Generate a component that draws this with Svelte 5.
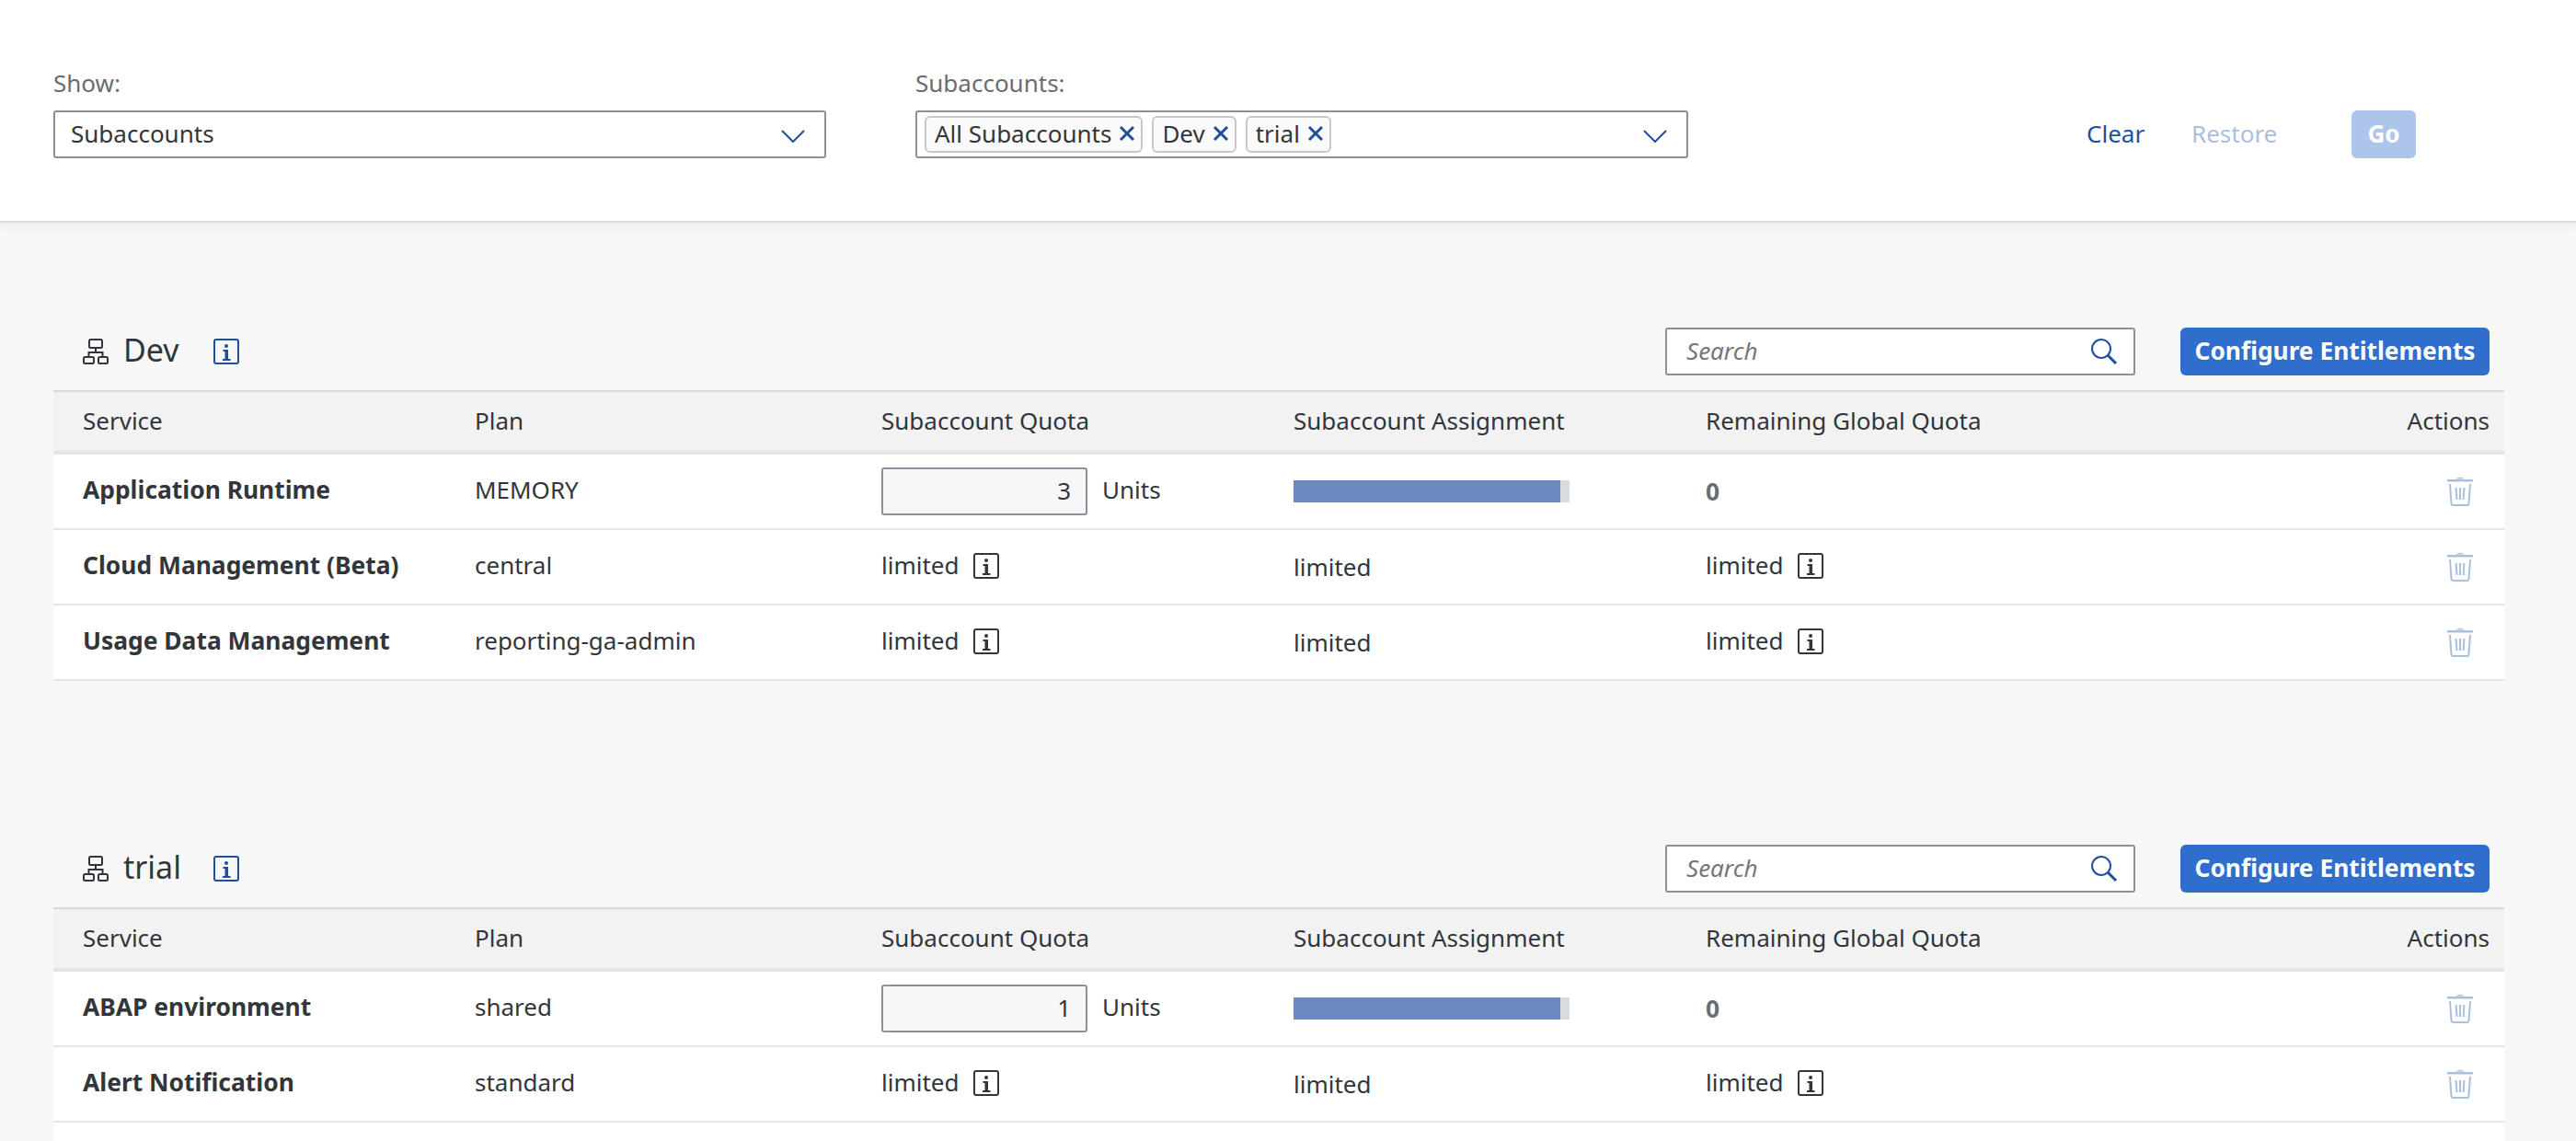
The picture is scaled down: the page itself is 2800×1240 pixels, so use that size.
<script>
  const sections = [
    {
      name: 'Dev',
      rows: [
        { service: 'Application Runtime', plan: 'MEMORY', quota: 3 },
        { service: 'Cloud Management (Beta)', plan: 'central' },
        { service: 'Usage Data Management', plan: 'reporting-ga-admin' }
      ]
    },
    {
      name: 'trial',
      rows: [
        { service: 'ABAP environment', plan: 'shared', quota: 1 },
        { service: 'Alert Notification', plan: 'standard' },
        { service: '', plan: '', blank: true }
      ]
    }
  ]
  const chips = ['All Subaccounts', 'Dev', 'trial']
</script>

{#snippet chevron()}
  <svg class="chevron" width="26" height="14" viewBox="0 0 26 14"><path d="M1 1l12 12L25 1" fill="none" stroke="#1d4f9c" stroke-width="2" /></svg>
{/snippet}

{#snippet info()}
  <svg class="info" width="28" height="28" viewBox="0 0 28 28">
    <rect x="1" y="1" width="26" height="26" rx="2" fill="none" stroke="currentColor" stroke-width="2" />
    <circle cx="14" cy="8" r="2" fill="currentColor" />
    <path d="M10.5 12h5.5v10h2.500v2h-8.500v-2h2.500v-8h-2z" fill="currentColor" />
  </svg>
{/snippet}

{#snippet trash()}
  <svg class="trash" width="28" height="32" viewBox="0 0 28 32">
    <path d="M9 2.500q5-3.500 10 0z" fill="#a9bfde" />
    <path d="M0 3h28v2.500H0z" fill="#a9bfde" />
    <path d="M3 8l1.500 21q.2 2 2 2h15q1.800 0 2-2L25 8" fill="none" stroke="#a9bfde" stroke-width="2" />
    <path d="M9.500 12l1 13M14 12v13M18.500 12l-1 13" fill="none" stroke="#a9bfde" stroke-width="2" />
  </svg>
{/snippet}

<header class="filterbar">
  <div class="field show">
    <span class="label">Show:</span>
    <div class="select">
      <span>Subaccounts</span>
      {@render chevron()}
    </div>
  </div>
  <div class="field subaccounts">
    <span class="label">Subaccounts:</span>
    <div class="select multi">
      <div class="chips">
        {#each chips as chip}
          <span class="chip">
            {chip}
            <svg width="18" height="18" viewBox="0 0 18 18"><path d="M2 2l14 14M16 2L2 16" stroke="#1d4f9c" stroke-width="3" /></svg>
          </span>
        {/each}
      </div>
      {@render chevron()}
    </div>
  </div>
  <div class="bar-actions">
    <span class="link clear">Clear</span>
    <span class="link disabled">Restore</span>
    <button class="go" type="button">Go</button>
  </div>
</header>

<main>
  {#each sections as section}
    <section>
      <div class="title-row">
        <svg class="tree" width="28" height="28" viewBox="0 0 28 28" fill="none" stroke="#32363a" stroke-width="2">
          <rect x="7" y="1" width="14" height="9" rx="1.500" />
          <rect x="1" y="20" width="11" height="7" rx="1.500" />
          <rect x="17" y="20" width="10" height="7" rx="1.500" />
          <path d="M14 10v5M6.500 20v-5h15v5" />
        </svg>
        <h2>{section.name}</h2>
        <span class="title-info">{@render info()}</span>
        <div class="search">
          <span>Search</span>
          <svg width="30" height="30" viewBox="0 0 30 30" fill="none" stroke="#1d4f9c">
            <circle cx="12" cy="12" r="10" stroke-width="2" />
            <path d="M19 19l9 9" stroke-width="3" />
          </svg>
        </div>
        <button class="primary" type="button">Configure Entitlements</button>
      </div>

      <div class="table">
        <div class="row head">
          <div>Service</div>
          <div>Plan</div>
          <div>Subaccount Quota</div>
          <div>Subaccount Assignment</div>
          <div>Remaining Global Quota</div>
          <div class="end">Actions</div>
        </div>
        {#each section.rows as row}
          <div class="row">
            {#if !row.blank}
              <div class="service">{row.service}</div>
              <div>{row.plan}</div>
              {#if row.quota}
                <div class="quota">
                  <span class="stepper">{row.quota}</span>
                  <span class="units">Units</span>
                </div>
                <div class="bar-cell"><div class="progress"><div class="fill" style="width: 290px"></div></div></div>
                <div class="zero">0</div>
              {:else}
                <div class="limited">limited {@render info()}</div>
                <div class="assign">limited</div>
                <div class="limited">limited {@render info()}</div>
              {/if}
              <div class="end">{@render trash()}</div>
            {/if}
          </div>
        {/each}
      </div>
    </section>
  {/each}
</main>

<style>
  :global(body) {
    margin: 0;
    background: #f7f7f7;
    overflow: hidden;
    font-family: "Noto Sans", "Open Sans", sans-serif;
    font-size: 26px;
    color: #32363a;
  }

  .filterbar {
    box-sizing: border-box;
    height: 242px;
    padding: 0 58px;
    display: flex;
    background: #ffffff;
    border-bottom: 2px solid #dcdcdc;
    box-shadow: 0 2px 14px rgba(0, 0, 0, 0.07);
    position: relative;
  }

  .field {
    display: flex;
    flex-direction: column;
    padding-top: 70px;
    width: 840px;
  }

  .subaccounts {
    margin-left: 97px;
  }

  .label {
    color: #6a6d70;
    line-height: 40px;
    margin-bottom: 10px;
  }

  .select {
    box-sizing: border-box;
    height: 52px;
    display: flex;
    align-items: center;
    justify-content: space-between;
    padding: 0 21px 0 17px;
    border: 2px solid #89919a;
    border-radius: 3px;
    background: #fff;
  }

  .select > span {
    margin-top: -3px;
  }

  .select.multi {
    padding-left: 8px;
  }

  .chevron {
    margin-top: 4px;
  }

  .chips {
    display: flex;
    gap: 10px;
  }

  .chip {
    box-sizing: border-box;
    height: 40px;
    padding: 0 6px 2px 9px;
    display: flex;
    align-items: center;
    gap: 8px;
    border: 2px solid #c6c8ca;
    border-radius: 6px;
    background: #fafafa;
  }

  .bar-actions {
    display: flex;
    align-items: center;
    height: 52px;
    margin-top: 120px;
    margin-left: 433px;
  }

  .link {
    margin-top: -3px;
    color: #1d4f9c;
  }

  .clear {
    width: 114px;
  }

  .link.disabled {
    width: 174px;
    color: #aabfdf;
  }

  .go {
    width: 70px;
    height: 52px;
    border: 0;
    border-radius: 6px;
    background: #adc5ea;
    color: #fff;
    font: 700 26px "Noto Sans", sans-serif;
    padding: 0 0 3px;
  }

  main {
    padding: 114px 78px 0 58px;
  }

  section + section {
    margin-top: 178px;
  }

  .title-row {
    display: flex;
    align-items: center;
    height: 52px;
    padding: 0 16px 0 32px;
    margin-bottom: 16px;
  }

  h2 {
    margin: 0 0 4px 16px;
    width: 98px;
    font-size: 34px;
    font-weight: 400;
  }

  .title-info {
    color: #1d4f9c;
    display: flex;
  }

  .search {
    box-sizing: border-box;
    margin-left: auto;
    width: 511px;
    height: 52px;
    display: flex;
    align-items: center;
    justify-content: space-between;
    padding: 0 17px 0 21px;
    border: 2px solid #89919a;
    border-radius: 3px;
    background: #fff;
    color: #74777a;
    font-style: italic;
  }

  .search span {
    margin-top: -3px;
  }

  .primary {
    margin-left: 49px;
    width: 336px;
    height: 52px;
    padding: 0 0 3px;
    border: 0;
    border-radius: 6px;
    background: #2f6ecc;
    color: #fff;
    font: 700 26.3px "Noto Sans", sans-serif;
    white-space: nowrap;
  }

  .row {
    display: grid;
    grid-template-columns: 426px 442px 448px 448px 1fr 200px;
    align-items: center;
    height: 80px;
    background: #fff;
    border-bottom: 2px solid #e5e5e5;
  }

  .row > div {
    padding-left: 32px;
    padding-bottom: 4px;
    white-space: nowrap;
  }

  .row.head {
    height: 64px;
    background: #f2f2f2;
    border-top: 2px solid #d9d9d9;
    border-bottom: 4px solid #e5e5e5;
  }

  .row.head > div {
    padding-bottom: 2px;
  }

  .row.head > .end {
    padding: 0 16px 2px 0;
  }

  .row > .end {
    display: flex;
    justify-content: flex-end;
  }

  .row:not(.head) > .end {
    padding: 0 34px 0 0;
  }

  .service {
    font-weight: 700;
    font-size: 26.4px;
  }

  .row > .quota {
    display: flex;
    align-items: center;
    gap: 16px;
    padding-bottom: 0;
  }

  .units {
    margin-bottom: 5px;
  }

  .stepper {
    box-sizing: border-box;
    width: 224px;
    height: 52px;
    padding-right: 16px;
    text-align: right;
    line-height: 46px;
    border: 2px solid #89919a;
    border-radius: 3px;
    background: #f7f7f7;
  }

  .row > .bar-cell {
    padding-bottom: 0;
  }

  .progress {
    width: 300px;
    height: 24px;
    background: #d8dbe0;
  }

  .fill {
    height: 100%;
    background: #6c89c1;
  }

  .row > .zero {
    font-weight: 700;
    color: #6a6d70;
    padding-bottom: 0;
    font-size: 26.4px;
  }

  .limited {
    display: flex;
    align-items: center;
    gap: 16px;
  }

  .row > .assign {
    padding-bottom: 1px;
  }

  .limited :global(svg) {
    margin-top: 2px;
  }

  .info {
    display: block;
  }
</style>
